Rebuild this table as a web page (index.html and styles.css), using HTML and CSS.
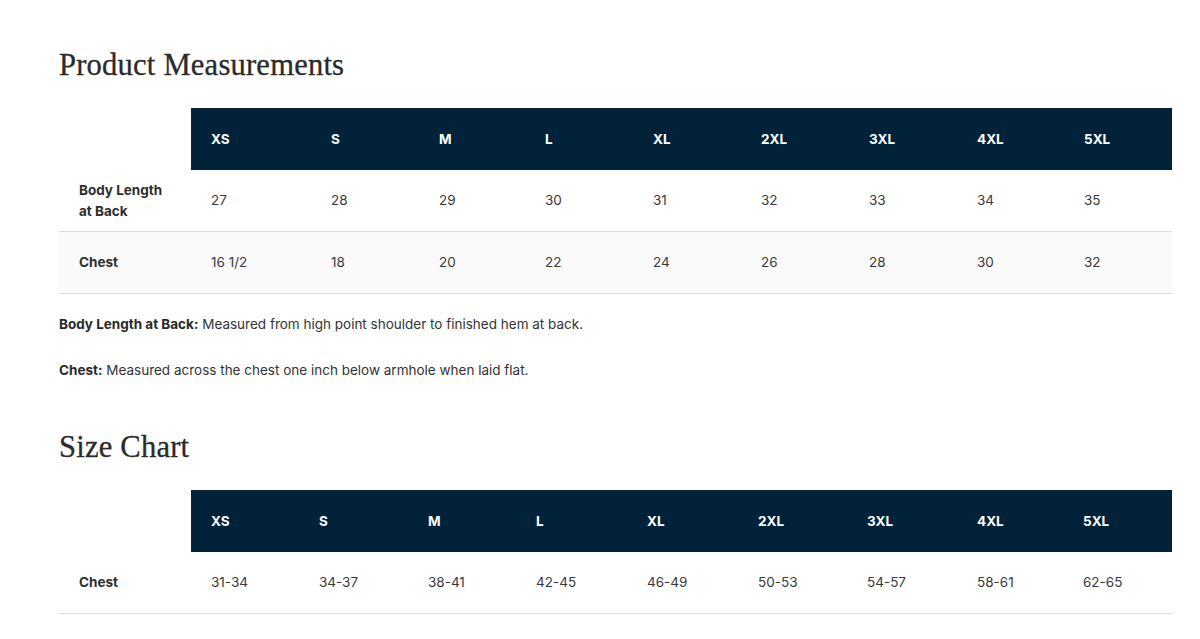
FILE: index.html
```html
<!DOCTYPE html>
<html lang="en">
<head>
<meta charset="utf-8">
<title>Product Measurements</title>
<link rel="stylesheet" href="styles.css">
</head>
<body>
<main class="page">
  <h2 class="title">Product Measurements</h2>
  <table class="chart chart-measure">
    <colgroup>
      <col class="c-label"><col class="c-xs"><col class="c-s"><col class="c-m"><col class="c-l"><col class="c-xl"><col class="c-2xl"><col class="c-3xl"><col class="c-4xl"><col class="c-5xl">
    </colgroup>
    <thead>
      <tr><th class="blank"></th><th>XS</th><th>S</th><th>M</th><th>L</th><th>XL</th><th>2XL</th><th>3XL</th><th>4XL</th><th>5XL</th></tr>
    </thead>
    <tbody>
      <tr><td class="label">Body Length<br>at Back</td><td>27</td><td>28</td><td>29</td><td>30</td><td>31</td><td>32</td><td>33</td><td>34</td><td>35</td></tr>
      <tr class="alt"><td class="label">Chest</td><td>16 1/2</td><td>18</td><td>20</td><td>22</td><td>24</td><td>26</td><td>28</td><td>30</td><td>32</td></tr>
    </tbody>
  </table>
  <p class="note first"><strong>Body Length at Back:</strong> Measured from high point shoulder to finished hem at back.</p>
  <p class="note"><strong>Chest:</strong> Measured across the chest one inch below armhole when laid flat.</p>

  <h2 class="title second">Size Chart</h2>
  <table class="chart chart-size">
    <colgroup>
      <col class="c-label"><col class="c-xs"><col class="c-s"><col class="c-m"><col class="c-l"><col class="c-xl"><col class="c-2xl"><col class="c-3xl"><col class="c-4xl"><col class="c-5xl">
    </colgroup>
    <thead>
      <tr><th class="blank"></th><th>XS</th><th>S</th><th>M</th><th>L</th><th>XL</th><th>2XL</th><th>3XL</th><th>4XL</th><th>5XL</th></tr>
    </thead>
    <tbody>
      <tr><td class="label">Chest</td><td>31-34</td><td>34-37</td><td>38-41</td><td>42-45</td><td>46-49</td><td>50-53</td><td>54-57</td><td>58-61</td><td>62-65</td></tr>
    </tbody>
  </table>
</main>
</body>
</html>
```

FILE: styles.css
```css
html, body {
  margin: 0;
  padding: 0;
  background: #ffffff;
}

body {
  font-family: Inter, "Liberation Sans", sans-serif;
  font-size: 13.5px;
  color: #333333;
}

.page {
  width: 1113px;
  padding: 45px 0 0 59px;
}

.title {
  margin: 0 0 23px 0;
  font-family: "Liberation Serif", "DejaVu Serif", serif;
  font-weight: 400;
  font-size: 30.6px;
  line-height: 40px;
  color: #2b2b2b;
  letter-spacing: 0.2px;
  -webkit-text-stroke: 0.3px #2b2b2b;
}

.title.second {
  margin-top: 46px;
}

.chart {
  width: 1113px;
  border-collapse: collapse;
  table-layout: fixed;
}

.c-label { width: 132px; }

.chart-measure .c-xs { width: 120px; }
.chart-measure .c-s { width: 108px; }
.chart-measure .c-m { width: 106px; }
.chart-measure .c-l { width: 108px; }
.chart-measure .c-xl { width: 108px; }
.chart-measure .c-2xl { width: 108px; }
.chart-measure .c-3xl { width: 108px; }
.chart-measure .c-4xl { width: 107px; }
.chart-measure .c-5xl { width: 108px; }

.chart-size .c-xs { width: 108px; }
.chart-size .c-s { width: 109px; }
.chart-size .c-m { width: 108px; }
.chart-size .c-l { width: 111px; }
.chart-size .c-xl { width: 111px; }
.chart-size .c-2xl { width: 109px; }
.chart-size .c-3xl { width: 110px; }
.chart-size .c-4xl { width: 106px; }
.chart-size .c-5xl { width: 109px; }

.chart th {
  height: 62px;
  padding: 0 0 0 20px;
  background: #02223a;
  color: #ffffff;
  font-weight: 700;
  font-size: 13.5px;
  text-align: left;
  vertical-align: middle;
}

.chart th.blank {
  background: #ffffff;
}

.chart td {
  height: 61px;
  padding: 0 0 0 20px;
  text-align: left;
  vertical-align: middle;
  line-height: 21px;
  border-bottom: 1px solid #dcdcdc;
  color: #3a3a3a;
}

.chart td.label {
  font-weight: 700;
  color: #2e2e2e;
}

.chart tr.alt td {
  background: #fafafa;
}

.note {
  margin: 0;
  line-height: 21px;
  color: #333333;
}

.note.first {
  margin-top: 20px;
  margin-bottom: 25px;
}

.note strong {
  font-weight: 700;
  color: #2a2a2a;
}
```
